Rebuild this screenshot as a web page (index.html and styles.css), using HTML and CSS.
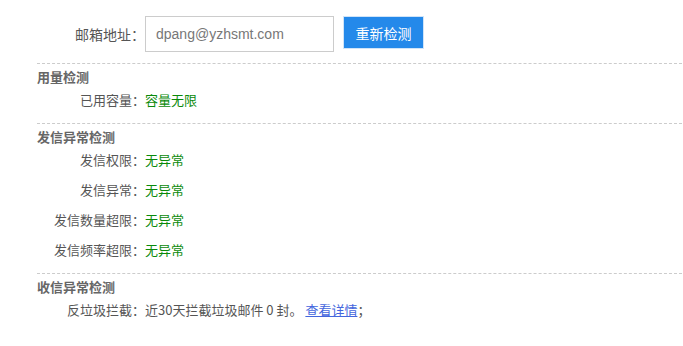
FILE: index.html
```html
<!DOCTYPE html>
<html lang="zh-CN">
<head>
  <meta charset="UTF-8">
  <meta name="viewport" content="width=device-width, initial-scale=1.0">
  <title>邮箱检测</title>
  <link rel="stylesheet" href="styles.css">
</head>
<body>
  <div class="check-panel">
    <div class="email-row">
      <label class="email-label" for="emailInput">邮箱地址：</label>
      <input id="emailInput" class="email-input" type="text" value="dpang@yzhsmt.com">
      <button class="recheck-btn">重新检测</button>
    </div>

    <div class="section">
      <div class="section-title">用量检测</div>
      <div class="row">
        <span class="row-label">已用容量：</span>
        <span class="ok">容量无限</span>
      </div>
    </div>

    <div class="section">
      <div class="section-title">发信异常检测</div>
      <div class="row">
        <span class="row-label">发信权限：</span>
        <span class="ok">无异常</span>
      </div>
      <div class="row">
        <span class="row-label">发信异常：</span>
        <span class="ok">无异常</span>
      </div>
      <div class="row">
        <span class="row-label">发信数量超限：</span>
        <span class="ok">无异常</span>
      </div>
      <div class="row">
        <span class="row-label">发信频率超限：</span>
        <span class="ok">无异常</span>
      </div>
    </div>

    <div class="section">
      <div class="section-title">收信异常检测</div>
      <div class="row">
        <span class="row-label">反垃圾拦截：</span>
        <span class="row-value">近30天拦截垃圾邮件 0 封。 <a href="#" class="detail-link">查看详情</a>；</span>
      </div>
    </div>
  </div>
</body>
</html>
```

FILE: styles.css
```css
body {
  margin: 0;
  background: #fff;
  font-family: "Microsoft YaHei", "Noto Sans CJK SC", sans-serif;
  font-size: 13px;
  color: #555;
}

.check-panel {
  padding: 16px 1px 0 37px;
}

.email-row {
  display: flex;
  align-items: flex-start;
  margin-bottom: 11px;
}

.email-label {
  width: 108px;
  line-height: 36px;
  font-size: 14px;
  text-align: right;
  color: #555;
}

.email-input {
  box-sizing: border-box;
  width: 189px;
  height: 36px;
  padding: 0 10px;
  border: 1px solid #ccc;
  font-family: Arial, "Liberation Sans", sans-serif;
  font-size: 14px;
  color: #777;
  outline: none;
}

.recheck-btn {
  box-sizing: border-box;
  height: 33px;
  width: 81px;
  margin-left: 9px;
  border: 1px solid #d0e4f8;
  background-color: #2489ea;
  color: #fff;
  font-family: inherit;
  font-size: 14px;
  cursor: pointer;
}

.section {
  border-top: 1px dashed #ccc;
  padding-top: 5px;
  margin-bottom: 8px;
}

.section-title {
  line-height: 16px;
  font-weight: bold;
  color: #666;
}

.row {
  display: flex;
  line-height: 30px;
}

.row-label {
  width: 108px;
  text-align: right;
}

.ok {
  color: #0a8a0a;
}

.detail-link {
  color: #4466dd;
  text-decoration: underline;
}
```
